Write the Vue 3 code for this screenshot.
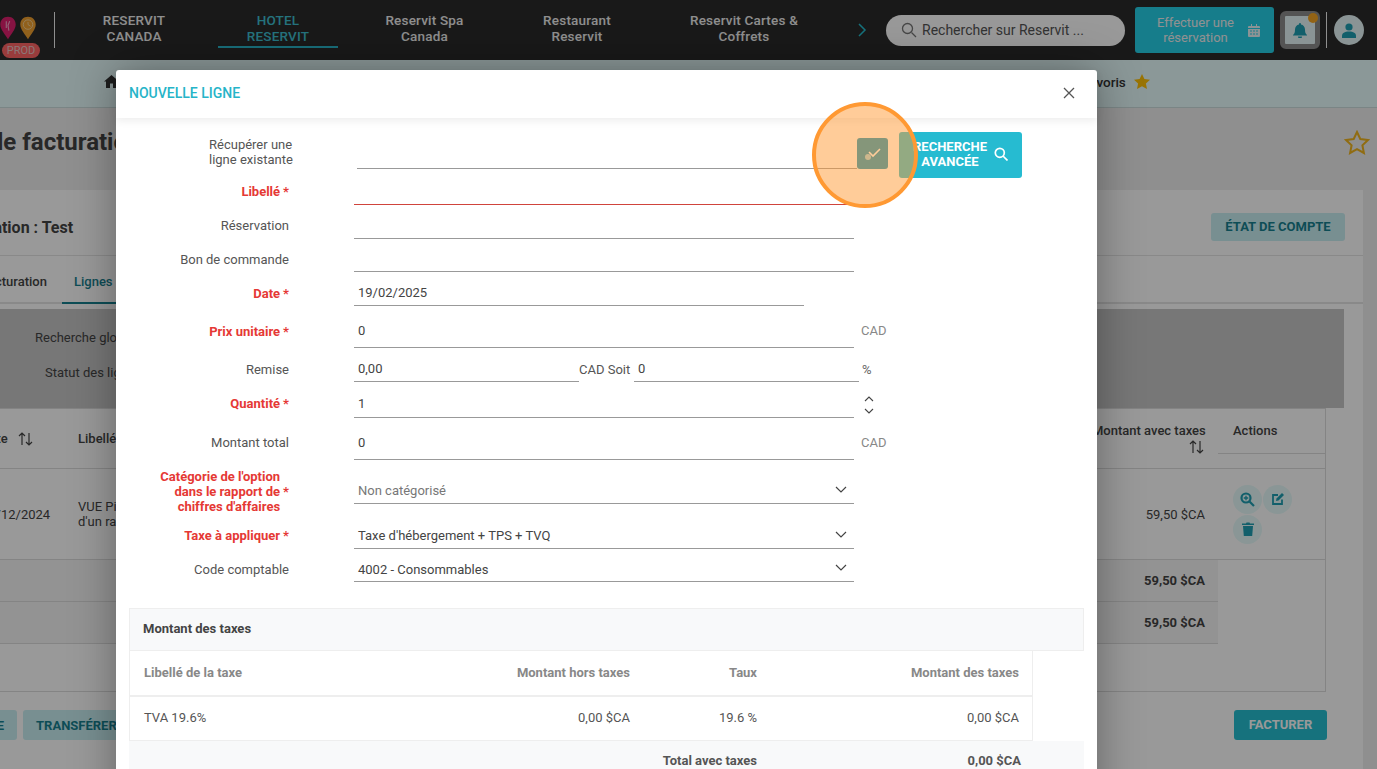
<template>
  <div class="page">
    <header class="topbar">
      <div class="logos">
        <div class="pins">
          <svg width="18" height="24" viewBox="0 0 20 28"><path d="M10 1C4.500 1 1 5 1 10c0 6 6 12 9 17 3-5 9-11 9-17 0-5-3.500-9-9-9z" fill="#e0206e"/><path d="M8 6v8M12 6l-2 5 1 6" stroke="#f0a8c8" stroke-width="1.300" fill="none"/></svg>
          <svg width="18" height="24" viewBox="0 0 20 28"><path d="M10 1C4.500 1 1 5 1 10c0 6 6 12 9 17 3-5 9-11 9-17 0-5-3.500-9-9-9z" fill="#f0a030"/><circle cx="10" cy="10" r="5.500" fill="none" stroke="#f8d8a0" stroke-width="1"/><path d="M10 7v3l3 2" stroke="#f8d8a0" fill="none"/></svg>
        </div>
        <span class="prod">PROD</span>
      </div>
      <div class="sep"></div>
      <nav class="nav">
        <a v-for="item in navItems" :key="item.text" class="nav-item" :class="{ active: item.active }" :style="{ width: item.w + 'px' }">{{ item.text }}</a>
      </nav>
      <svg class="nav-next" width="10" height="14" viewBox="0 0 10 14"><path d="M2 1l6 6-6 6" fill="none" stroke="#26bfd0" stroke-width="1.500"/></svg>
      <div class="search">
        <svg width="16" height="16" viewBox="0 0 16 16"><circle cx="6.500" cy="6.500" r="5" fill="none" stroke="#777" stroke-width="1.300"/><path d="M10.500 10.500l4.500 4.500" stroke="#777" stroke-width="1.300"/></svg>
        <span>Rechercher sur Reservit ...</span>
      </div>
      <div class="book">
        <span>Effectuer une<br />réservation</span>
        <svg width="12" height="14" viewBox="0 0 12 14"><path d="M1 3h10a1 1 0 0 1 1 1v1H0V4a1 1 0 0 1 1-1zM0 6h12v7a1 1 0 0 1-1 1H1a1 1 0 0 1-1-1zM3 1h1v2H3zM8 1h1v2H8z" fill="#e8f6f8"/><path d="M2 8h2M5 8h2M8 8h2M2 11h2M5 11h2M8 11h2" stroke="#26d0e8" stroke-width="1"/></svg>
      </div>
      <div class="bell">
        <svg width="14" height="15" viewBox="0 0 14 15"><path d="M7 0a1 1 0 0 1 1 1v.600C10.300 2 12 4 12 6.500c0 3 .6 4.200 2 5.500v.600H0V12c1.400-1.300 2-2.500 2-5.500C2 4 3.700 2 6 1.600V1a1 1 0 0 1 1-1zM5 13.500h4a2 2 0 0 1-4 0z" fill="#1f9fb2"/></svg>
        <i class="dot"></i>
      </div>
      <div class="sep sep-right"></div>
      <div class="avatar">
        <svg width="14" height="15" viewBox="0 0 14 15"><circle cx="7" cy="4" r="3.600" fill="#1f9fb2"/><path d="M0 15v-2c0-3 2.500-4.500 7-4.500s7 1.500 7 4.500v2z" fill="#1f9fb2"/></svg>
      </div>
    </header>

    <div class="subbar">
      <svg class="home" width="15" height="13" viewBox="0 0 15 13"><path d="M7.500 0L15 6.500h-2V13H9V8.500H6V13H2V6.500H0z" fill="#333"/></svg>
      <span class="fav">Favoris</span>
      <svg width="16" height="15" viewBox="0 0 16 15"><path d="M8 0l2.400 5 5.600.700-4.100 3.800 1.100 5.500L8 12.300 3 15l1.100-5.500L0 5.700 5.600 5z" fill="#ffc107"/></svg>
    </div>

    <div class="content">
      <div class="title-row">
        <h1>Module de facturation</h1>
        <svg width="26" height="25" viewBox="0 0 26 25"><path d="M13 2l3.300 7 7.700 1-5.600 5.300 1.500 7.700L13 19.200 6.100 23l1.500-7.700L2 10l7.700-1z" fill="none" stroke="#f0b51e" stroke-width="2"/></svg>
      </div>
      <section class="card">
        <div class="card-head">
          <h2>Facturation : Test</h2>
          <button class="soft-btn etat">ÉTAT DE COMPTE</button>
        </div>
        <div class="tabs">
          <span>Facturation</span>
          <span class="tab-active">Lignes</span>
        </div>
        <div class="filters">
          <span class="f1">Recherche globale</span>
          <span class="f2">Statut des lignes</span>
        </div>
        <div class="table">
          <div class="t-head">
            <span class="c-date">Date
              <svg class="sort" width="15" height="14" viewBox="0 0 15 14"><path d="M4 13V1M1 4l3-3 3 3M11 1v12M8 10l3 3 3-3" fill="none" stroke="#444" stroke-width="1.200"/></svg>
            </span>
            <span class="c-lib">Libellé</span>
            <span class="c-amt">Montant avec taxes<br />
              <svg class="sort-amt" width="15" height="14" viewBox="0 0 15 14"><path d="M4 13V1M1 4l3-3 3 3M11 1v12M8 10l3 3 3-3" fill="none" stroke="#444" stroke-width="1.200"/></svg>
            </span>
            <span class="c-act">Actions</span>
          </div>
          <div class="t-row">
            <span class="c-date">18/12/2024</span>
            <span class="c-lib">VUE Pi<br />d'un ra</span>
            <span class="c-amt">59,50 $CA</span>
            <span class="actions">
              <i class="round"><svg width="15" height="15" viewBox="0 0 15 15"><circle cx="6" cy="6" r="4.500" fill="none" stroke="#1f9fb2" stroke-width="2.200"/><path d="M9.500 9.500L14 14" stroke="#1f9fb2" stroke-width="2.200"/><path d="M6 3.800v4.400M3.800 6h4.400" stroke="#1f9fb2" stroke-width="1.300"/></svg></i>
              <i class="round"><svg width="14" height="14" viewBox="0 0 14 14"><path d="M11 7.500V12H2V3h5" fill="none" stroke="#1f9fb2" stroke-width="1.800"/><path d="M5.500 6.500L11 1l2 2-5.500 5.500-2.500.5z" fill="#1f9fb2"/></svg></i>
              <i class="round"><svg width="12" height="14" viewBox="0 0 12 14"><path d="M1 4h10l-.8 10H1.800zM0 1.500h4L4.500.5h3l.5 1h4V3H0z" fill="#1f9fb2"/></svg></i>
            </span>
          </div>
          <div class="t-total"><span class="c-amt">59,50 $CA</span></div>
          <div class="t-total"><span class="c-amt">59,50 $CA</span></div>
        </div>
        <div class="card-foot">
          <div class="foot-left">
            <button class="soft-btn">SUPPRIMER LA LIGNE</button>
            <button class="soft-btn">TRANSFÉRER</button>
          </div>
          <button class="solid-btn">FACTURER</button>
        </div>
      </section>
    </div>

    <div class="overlay"></div>

    <div class="modal">
      <div class="modal-head">
        <span>NOUVELLE LIGNE</span>
        <svg width="12" height="12" viewBox="0 0 12 12"><path d="M1 1l10 10M11 1L1 11" stroke="#555" stroke-width="1.300"/></svg>
      </div>
      <div class="modal-body">
        <div class="first-row">
          <div class="first-label">Récupérer une<br />ligne existante</div>
          <div class="first-line"></div>
          <button class="check">
            <svg width="20" height="14" viewBox="0 0 20 14"><circle cx="5" cy="10" r="3" fill="#fff" opacity=".6"/><path d="M6 7l4 4 7-7" transform="translate(0 -2)" fill="none" stroke="#fff" stroke-width="1.600"/></svg>
          </button>
          <button class="advanced">
            <span>RECHERCHE<br />AVANCÉE</span>
            <svg width="14" height="14" viewBox="0 0 14 14"><circle cx="5.800" cy="5.800" r="4.500" fill="none" stroke="#fff" stroke-width="1.700"/><path d="M9 9l4.500 4.500" stroke="#fff" stroke-width="1.700"/></svg>
          </button>
        </div>

        <div v-for="r in rows" :key="r.label" class="row" :style="{ height: r.h + 'px' }">
          <div class="label" :class="{ req: r.req }" :style="{ marginBottom: r.lb + 'px' }">
            <span class="label-text" v-html="r.label"></span>
            <span v-if="r.req" class="star">*</span>
          </div>
          <template v-if="r.kind === 'remise'">
            <div class="field remise" :style="{ paddingBottom: r.vb + 'px' }">{{ r.value }}</div>
            <span class="between" :style="{ paddingBottom: r.vb + 'px' }">CAD Soit</span>
            <div class="field pct" :style="{ paddingBottom: r.vb + 'px' }">0</div>
            <span class="unit unit-pct" :style="{ paddingBottom: r.vb + 'px' }">%</span>
          </template>
          <template v-else>
            <div class="field" :class="{ invalid: r.invalid, short: r.short, select: r.select, muted: r.muted }" :style="{ paddingBottom: r.vb + 'px' }">
              {{ r.value }}
              <svg v-if="r.select" class="chev" width="12" height="7" viewBox="0 0 12 7"><path d="M1 1l5 5 5-5" fill="none" stroke="#444" stroke-width="1.200"/></svg>
            </div>
            <span v-if="r.unit" class="unit" :style="{ paddingBottom: r.vb + 1 + 'px' }">{{ r.unit }}</span>
            <span v-if="r.spin" class="spin">
              <svg width="10" height="6" viewBox="0 0 10 6"><path d="M1 5l4-4 4 4" fill="none" stroke="#444" stroke-width="1.100"/></svg>
              <svg width="10" height="6" viewBox="0 0 10 6"><path d="M1 1l4 4 4-4" fill="none" stroke="#444" stroke-width="1.100"/></svg>
            </span>
          </template>
        </div>

        <div class="tax-panel">Montant des taxes</div>
        <div class="tax-table">
          <div class="tax-row tax-head">
            <span>Libellé de la taxe</span><span>Montant hors taxes</span><span>Taux</span><span>Montant des taxes</span>
          </div>
          <div class="tax-row">
            <span>TVA 19.6%</span><span>0,00 $CA</span><span>19.6 %</span><span>0,00 $CA</span>
          </div>
        </div>
        <div class="tax-total">
          <span>Total avec taxes</span>
          <span>0,00 $CA</span>
        </div>
      </div>
    </div>

    <div class="spot"></div>
  </div>
</template>

<script setup>
const navItems = [
  { text: 'RESERVIT CANADA', w: 120 },
  { text: 'HOTEL RESERVIT', w: 120, active: true },
  { text: 'Reservit Spa Canada', w: 125 },
  { text: 'Restaurant Reservit', w: 132 },
  { text: 'Reservit Cartes & Coffrets', w: 154 }
];

const rows = [
  { label: 'Libellé', req: true, h: 36, lb: 6, vb: 6, invalid: true, value: '' },
  { label: 'Réservation', h: 34, lb: 6, vb: 6, value: '' },
  { label: 'Bon de commande', h: 33, lb: 5, vb: 5, value: '' },
  { label: 'Date', req: true, h: 34, lb: 5, vb: 4, short: true, value: '19/02/2025' },
  { label: 'Prix unitaire', req: true, h: 42, lb: 9, vb: 8, value: '0', unit: 'CAD' },
  { label: 'Remise', h: 34, lb: 5, vb: 4, kind: 'remise', value: '0,00' },
  { label: 'Quantité', req: true, h: 36, lb: 7, vb: 5, value: '1', spin: true },
  { label: 'Montant total', h: 42, lb: 10, vb: 8, value: '0', unit: 'CAD' },
  { label: "Catégorie de l'option<br>dans le rapport de<br>chiffres d'affaires", req: true, h: 44, lb: -10, vb: 4, select: true, muted: true, value: 'Non catégorisé' },
  { label: 'Taxe à appliquer', req: true, h: 45, lb: 6, vb: 4, select: true, value: "Taxe d'hébergement + TPS + TVQ" },
  { label: 'Code comptable', h: 33, lb: 5, vb: 3, select: true, value: '4002 - Consommables' }
];
</script>

<style>
html,
body {
  margin: 0;
  overflow: hidden;
}
</style>

<style scoped>
* {
  box-sizing: border-box;
}

.page {
  position: relative;
  width: 1377px;
  height: 769px;
  overflow: hidden;
  background: #eee;
  font-family: Roboto, "Liberation Sans", sans-serif;
  font-size: 13px;
  color: #444;
}

.topbar {
  display: flex;
  align-items: center;
  height: 60px;
  background: #2b2b2b;
}

.logos {
  position: relative;
  width: 54px;
  height: 60px;
  flex: none;
  overflow: hidden;
}

.pins {
  display: flex;
  gap: 2px;
  margin: 16px 0 0 -1px;
}

.prod {
  position: absolute;
  left: 2px;
  top: 43px;
  width: 38px;
  height: 15px;
  border-radius: 8px;
  background: #ff6464;
  color: #e8c8c8;
  font-size: 11px;
  line-height: 15px;
  text-align: center;
}

.sep {
  width: 1px;
  height: 36px;
  background: #eee;
  flex: none;
}

.nav {
  display: flex;
  margin-left: 19px;
  gap: 24px;
}

.nav-item {
  height: 36px;
  padding: 0 8px;
  color: #eee;
  font-size: 13.5px;
  font-weight: 500;
  line-height: 16px;
  text-align: center;
  letter-spacing: .2px;
}

.nav-item.active {
  color: #3fc0d2;
  border-bottom: 2px solid #2ab8cc;
}

.nav-next {
  margin-left: 36px;
  flex: none;
}

.search {
  display: flex;
  align-items: center;
  gap: 5px;
  width: 239px;
  height: 31px;
  margin-left: 19px;
  padding-left: 15px;
  border-radius: 16px;
  background: #fff;
  color: #555;
  font-size: 14px;
  flex: none;
}

.book {
  display: flex;
  align-items: center;
  justify-content: center;
  gap: 14px;
  width: 139px;
  height: 46px;
  margin-left: 10px;
  padding-left: 8px;
  border-radius: 3px;
  background: #26d0e8;
  color: #f2f2f2;
  font-size: 13px;
  line-height: 15px;
  text-align: center;
  flex: none;
}

.bell {
  position: relative;
  display: flex;
  align-items: center;
  justify-content: center;
  width: 40px;
  height: 38px;
  margin-left: 6px;
  border: 5px solid #8c8c8c;
  border-radius: 6px;
  background: #e6f7f8;
  flex: none;
}

.dot {
  position: absolute;
  right: -3px;
  top: -3px;
  width: 10px;
  height: 10px;
  border-radius: 50%;
  background: #f5a623;
}

.sep-right {
  margin-left: 6px;
}

.avatar {
  display: flex;
  align-items: center;
  justify-content: center;
  width: 30px;
  height: 30px;
  margin-left: 7px;
  border-radius: 50%;
  background: #e6f7f8;
  flex: none;
}

.subbar {
  display: flex;
  align-items: center;
  height: 48px;
  padding: 0 0 4px 104px;
  background: #e8fdfd;
  border-bottom: 1px solid #ccdede;
  font-size: 13.5px;
  font-weight: 500;
  color: #333;
}

.home {
  margin-right: 963px;
}

.fav {
  margin-right: 8px;
}

.content {
  margin-left: -120px;
}

.title-row {
  display: flex;
  align-items: center;
  justify-content: space-between;
  height: 82px;
  padding: 0 7px 14px 0;
}

h1 {
  margin: 0 0 0 23px;
  font-size: 24px;
  font-weight: 700;
  color: #444;
}

.card {
  width: 1483px;
  height: 600px;
  background: #fff;
}

.card-head {
  display: flex;
  align-items: center;
  justify-content: space-between;
  height: 66px;
  padding: 8px 18px 0 0;
  border-bottom: 1px solid #e4e4e4;
}

h2 {
  margin: 1px 0 0 68px;
  font-size: 16px;
  font-weight: 700;
  color: #444;
}

.soft-btn {
  height: 30px;
  padding: 0 13px;
  border: 0;
  border-radius: 3px;
  background: #c9eef2;
  color: #17808f;
  font: 700 13px Roboto, sans-serif;
}

.etat {
  width: 134px;
  height: 28px;
  padding: 0;
}

.tabs {
  display: flex;
  align-items: flex-end;
  height: 48px;
  margin-bottom: 5px;
  border-bottom: 2px solid #e4e4e4;
  padding-left: 101px;
  font-weight: 500;
}

.tabs span {
  padding-bottom: 13px;
}

.tabs .tab-active {
  margin: 0 0 -2px 15px;
  padding: 0 30px 13px 12px;
  color: #17808f;
  border-bottom: 2px solid #17808f;
}

.filters {
  display: flex;
  flex-direction: column;
  align-items: flex-end;
  width: 1464px;
  height: 99px;
  background: #c6c6c6;
}

.filters span {
  width: 1309px;
}

.f1 {
  margin-top: 21px;
}

.f2 {
  margin-top: 20px;
  padding-left: 10px;
}

.table {
  width: 1446px;
  height: 284px;
  border: 1px solid #ddd;
  border-left: 0;
}

.t-head,
.t-row,
.t-total {
  display: flex;
  border-bottom: 1px solid #ddd;
}

.t-head {
  height: 60px;
  align-items: center;
  font-weight: 500;
}

.t-head .c-date {
  display: flex;
  align-items: center;
  gap: 10px;
  padding-left: 101px;
}

.t-head .c-amt,
.t-head .c-act {
  align-self: flex-start;
  padding-top: 14px;
}

.t-head .c-amt {
  padding-right: 14px;
}

.t-head .c-act {
  width: 107px;
  height: 45px;
  padding-left: 15px;
  border-bottom: 1px solid #ddd;
}

.t-row {
  height: 91px;
  align-items: center;
}

.t-total {
  width: 1338px;
  height: 42px;
  align-items: center;
  background: #f6f6f6;
  font-weight: 700;
}

.c-date {
  width: 198px;
  padding-left: 101px;
  flex: none;
}

.c-lib {
  width: 1014px;
  flex: none;
  line-height: 15px;
}

.c-amt {
  width: 126px;
  padding-right: 13px;
  text-align: right;
  white-space: nowrap;
  flex: none;
}

.t-total .c-amt {
  margin-left: 1212px;
}

.sort-amt {
  margin-top: 2px;
}

.actions {
  display: flex;
  flex-wrap: wrap;
  width: 70px;
  margin-left: 15px;
  gap: 1px;
}

.round {
  display: flex;
  align-items: center;
  justify-content: center;
  width: 29px;
  height: 29px;
  border-radius: 50%;
  background: #e6fbfa;
}

.card-foot {
  display: flex;
  justify-content: space-between;
  width: 1447px;
  margin-top: 18px;
}

.foot-left {
  display: flex;
  gap: 6px;
  margin-left: -20px;
}

.solid-btn {
  width: 93px;
  height: 30px;
  padding: 0 0 2px;
  border: 0;
  border-radius: 3px;
  background: #26bfd0;
  color: #fff;
  font: 700 13px Roboto, sans-serif;
}

.overlay {
  position: absolute;
  inset: 0;
  background: rgba(0, 0, 0, .4);
}

.modal {
  position: absolute;
  left: 116px;
  top: 70px;
  width: 981px;
  height: 760px;
  border-radius: 3px;
  background: #fff;
  box-shadow: 0 0 45px rgba(0, 0, 0, .35);
}

.modal-head {
  position: relative;
  display: flex;
  align-items: center;
  justify-content: space-between;
  height: 48px;
  padding: 0 22px 2px 13px;
  color: #26b4c8;
  font-size: 14px;
  font-weight: 500;
  box-shadow: 0 3px 8px rgba(0, 0, 0, .07);
}

.modal-body {
  padding: 14px 13px 0 0;
  color: #555;
}

.first-row {
  display: flex;
  align-items: flex-end;
  height: 37px;
}

.first-label {
  width: 177px;
  padding: 0 0 2px 93px;
  line-height: 15px;
  white-space: nowrap;
}

.first-line {
  width: 500px;
  margin-left: 64px;
  border-bottom: 1px solid #999;
}

.check {
  display: flex;
  align-items: center;
  justify-content: center;
  width: 31px;
  height: 31px;
  border: 0;
  border-radius: 3px;
  background: #0a93c0;
  padding: 0;
}

.advanced {
  display: flex;
  align-items: center;
  justify-content: center;
  gap: 7px;
  width: 123px;
  height: 46px;
  margin: 0 0 -9px 11px;
  padding: 0 0 2px;
  border: 0;
  border-radius: 3px;
  background: #26bbd1;
  color: #fff;
  font: 700 13px/15px Roboto, sans-serif;
  text-align: center;
}

.row {
  display: flex;
  align-items: flex-end;
}

.label {
  display: flex;
  justify-content: flex-end;
  align-items: center;
  gap: 3px;
  width: 173px;
  margin-right: 65px;
  line-height: 15px;
  text-align: right;
  white-space: nowrap;
}

.label.req {
  color: #e53935;
  font-weight: 700;
}

.star {
  font-weight: 700;
}

.field {
  position: relative;
  width: 500px;
  min-height: 20px;
  padding-left: 4px;
  line-height: 16px;
  color: #444;
  border-bottom: 1px solid #999;
}

.field.invalid {
  border-bottom-color: #d0443c;
}

.field.short {
  width: 450px;
}

.field.muted {
  color: #777;
}

.chev {
  position: absolute;
  right: 7px;
  bottom: 10px;
}

.field.remise,
.field.pct {
  width: 225px;
}

.between {
  width: 55px;
  line-height: 16px;
  white-space: nowrap;
}

.unit {
  margin-left: 7px;
  color: #888;
  line-height: 16px;
}

.unit-pct {
  margin-left: 3px;
  color: #666;
}

.spin {
  display: flex;
  flex-direction: column;
  gap: 6px;
  margin: 0 0 4px 10px;
}

.spin svg {
  display: block;
}

.tax-panel {
  width: 955px;
  height: 43px;
  margin: 26px 0 0 13px;
  padding-left: 13px;
  border: 1px solid #eee;
  background: #f8f9fa;
  color: #444;
  font-weight: 700;
  line-height: 40px;
}

.tax-table {
  width: 904px;
  margin-left: 13px;
}

.tax-row {
  display: grid;
  grid-template-columns: 150px 336px 127px 262px;
  height: 44px;
  align-items: center;
  padding: 0 0 2px 14px;
  border-left: 1px solid #eee;
  border-right: 1px solid #eee;
  border-bottom: 1px solid #eee;
}

.tax-row span + span {
  text-align: right;
}

.tax-head {
  height: 46px;
  color: #888;
  font-weight: 700;
  border-bottom-width: 2px;
}

.tax-total {
  display: grid;
  grid-template-columns: 628px 264px;
  width: 955px;
  height: 40px;
  margin-left: 13px;
  padding-top: 12px;
  background: #f8f9fa;
  font-weight: 700;
  text-align: right;
}

.spot {
  position: absolute;
  left: 812px;
  top: 102px;
  width: 106px;
  height: 106px;
  border: 4px solid #ff9933;
  border-radius: 50%;
  background: rgba(255, 153, 51, .5);
}
</style>
